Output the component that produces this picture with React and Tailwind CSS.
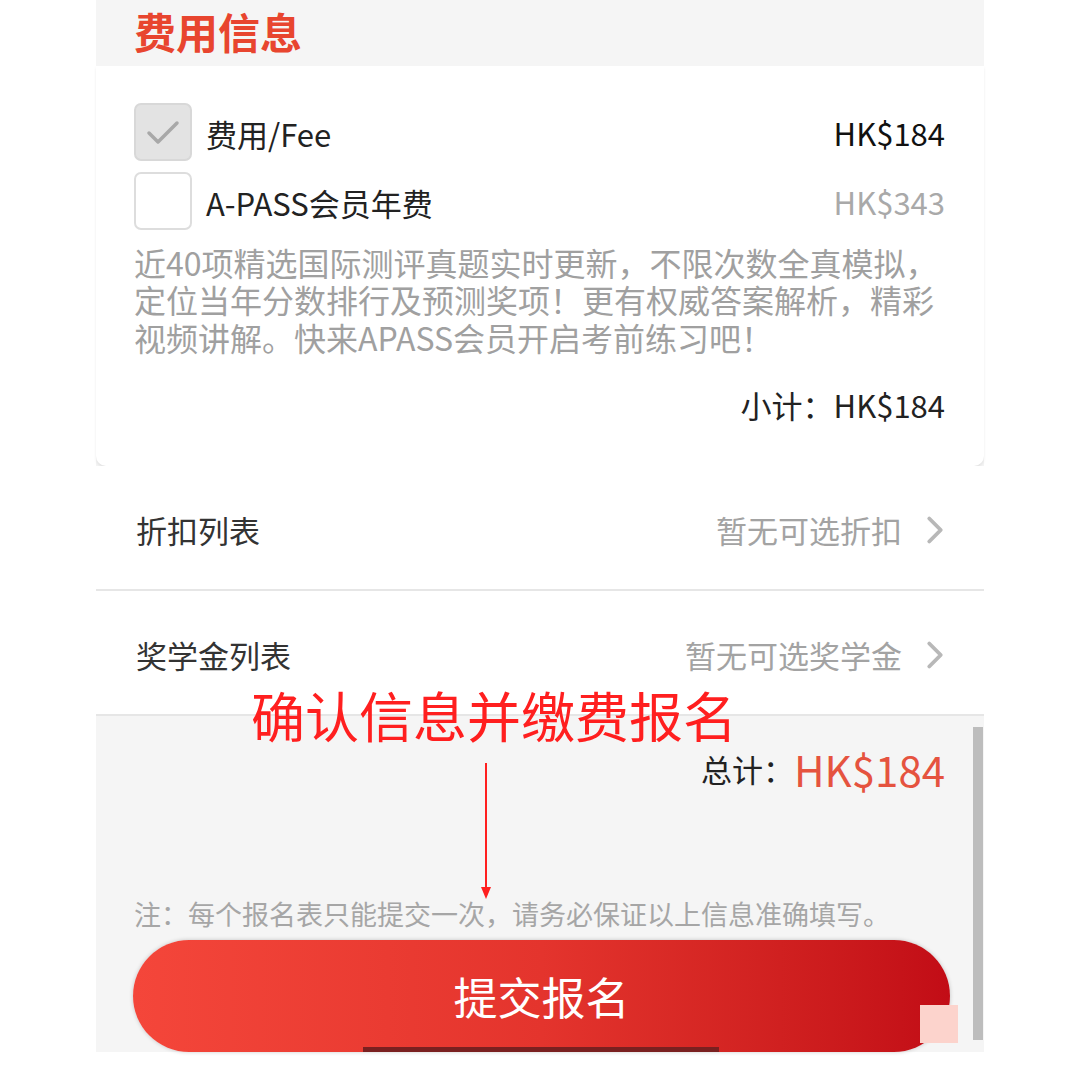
import { ChevronRight } from "lucide-react";

const font = { fontFamily: '"Noto Sans CJK SC", "Noto Sans", sans-serif' };

function Checkbox({ checked }) {
  return (
    <div
      className={`w-[58px] h-[58px] rounded-[7px] border-2 flex items-center justify-center shrink-0 ${
        checked ? "bg-[#e3e3e3] border-[#d8d8d8]" : "bg-white border-[#dddddd]"
      }`}
    >
      {checked && (
        <svg width="36" height="30" viewBox="0 0 36 30" fill="none">
          <path d="M4 16 L13 25 L32 6" stroke="#a8a8a8" strokeWidth="3.5" strokeLinecap="round" strokeLinejoin="round" />
        </svg>
      )}
    </div>
  );
}

function FeeRow({ checked, label, price }) {
  return (
    <div className="flex items-center h-[58px]">
      <Checkbox checked={checked} />
      <span className="ml-[14px] text-[31px] text-[#222] leading-none mt-[2px]">{label}</span>
      <span className={`ml-auto text-[31px] leading-none ${checked ? "text-[#111]" : "text-[#a9a9a9]"}`}>{price}</span>
    </div>
  );
}

function LinkRow({ label, value }) {
  return (
    <div className="h-[125px] bg-white border-b-2 border-[#e6e6e6] flex items-center pl-[40px] pr-[26px] pt-[6px]">
      <span className="text-[31px] text-[#333]">{label}</span>
      <span className="ml-auto text-[31px] text-[#a3a3a3]">{value}</span>
      <ChevronRight size={46} strokeWidth={2} className="ml-[10px] text-[#b8b8b8]" />
    </div>
  );
}

const desc = [
  "近40项精选国际测评真题实时更新，不限次数全真模拟，",
  "定位当年分数排行及预测奖项！更有权威答案解析，精彩",
  "视频讲解。快来APASS会员开启考前练习吧！",
];

export default function App() {
  return (
    <div className="min-h-screen bg-white flex justify-center" style={font}>
      <div className="w-[888px] h-[1052px] bg-[#f5f5f5] relative flex flex-col">
        {/* Header */}
        <div className="h-[66px] flex items-center pl-[38px]">
          <h1 className="text-[42px] font-bold text-[#e8452f] leading-none mb-[4px]">费用信息</h1>
        </div>

        {/* Fee card */}
        <div className="bg-white rounded-b-[10px] shadow-[0_2px_3px_rgba(0,0,0,0.08)] pl-[38px] pr-[39px] pt-[37px] pb-[40px]">
          <div className="flex flex-col gap-[11px]">
            <FeeRow checked label="费用/Fee" price="HK$184" />
            <FeeRow label="A-PASS会员年费" price="HK$343" />
          </div>
          <div className="mt-[13px] flex flex-col text-[32px] text-[#a0a0a0] whitespace-nowrap">
            {desc.map((line) => (
              <div key={line} className="h-[37.5px] flex items-center leading-none">
                {line}
              </div>
            ))}
          </div>
          <div className="mt-[30px] h-[40px] flex items-center justify-end text-[31px] text-[#222]">
            小计：HK$184
          </div>
        </div>

        {/* Lists */}
        <LinkRow label="折扣列表" value="暂无可选折扣" />
        <LinkRow label="奖学金列表" value="暂无可选奖学金" />

        {/* Bottom */}
        <div className="flex-1 flex flex-col pl-[37px] pr-[34px] pt-[26px]">
          <div className="flex items-end justify-end h-[48px] pr-[5px]">
            <span className="text-[31px] text-[#222] leading-none mb-[6px]">总计：</span>
            <span className="text-[42px] text-[#e5533f] leading-none">HK$184</span>
          </div>
          <p className="mt-auto text-[27px] text-[#a6a6a6] leading-none ml-[1px] mb-[13px]">
            注：每个报名表只能提交一次，请务必保证以上信息准确填写。
          </p>
          <button className="h-[112px] w-full shrink-0 rounded-full bg-gradient-to-r from-[#f4463a] via-[#e4342d] to-[#c20c16] text-white text-[44px] flex items-center justify-center shadow-[0_0_4px_rgba(0,0,0,0.2)]">
            提交报名
          </button>
        </div>

        {/* Scrollbar */}
        <div className="absolute right-[1px] top-[727px] w-[10px] h-[313px] bg-[#bdbdbd]" />

        {/* Screenshot artifacts over the button */}
        <div className="absolute left-[824px] top-[1005px] w-[38px] h-[38px] bg-[#fcd3cc]" />
        <div className="absolute left-[267px] top-[1047px] w-[356px] h-[5px] bg-[#7a2020]" />

        {/* Annotation */}
        <div className="absolute left-[155px] top-[688px] text-[54px] leading-none text-[#ff1f1f]">
          确认信息并缴费报名
        </div>
        <svg className="absolute left-[383px] top-[763px]" width="14" height="138" viewBox="0 0 14 138">
          <line x1="7" y1="0" x2="7" y2="128" stroke="#ff1f1f" strokeWidth="2" />
          <path d="M2 124 L7 136 L12 124 Z" fill="#ff1f1f" />
        </svg>
      </div>
    </div>
  );
}
